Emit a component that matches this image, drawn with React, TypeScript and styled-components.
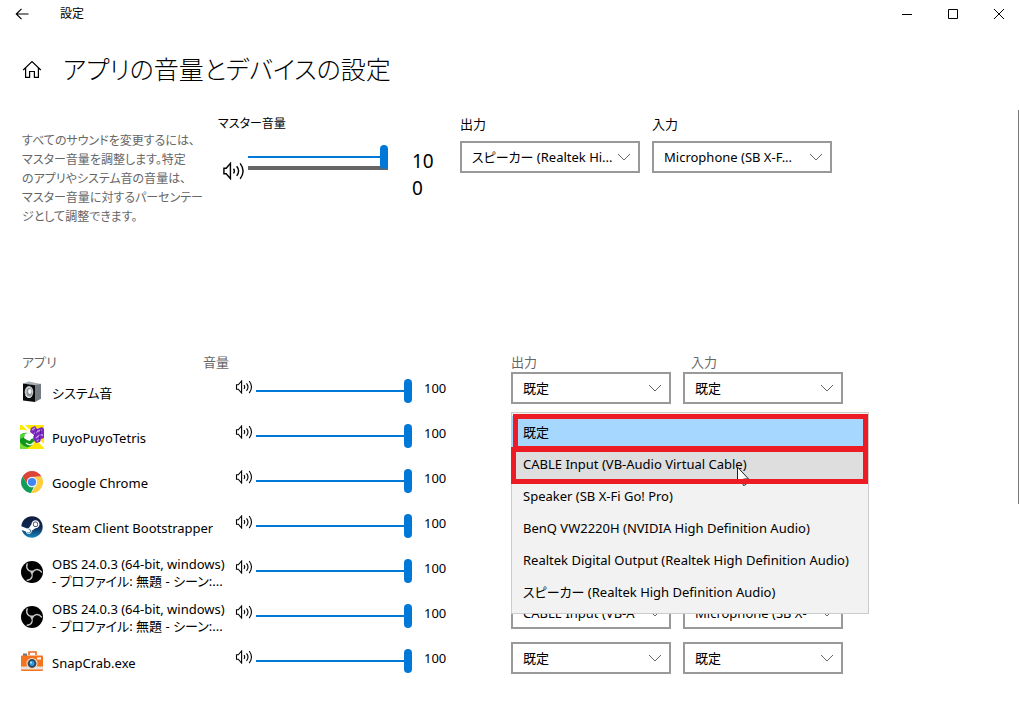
import React from "react";
import styled, { createGlobalStyle } from "styled-components";
import { FaSteam } from "react-icons/fa";

const Global = createGlobalStyle`
  *, *::before, *::after { box-sizing: border-box; }
  body {
    margin: 0;
    background: #fff;
    color: #000;
    font-family: "Noto Sans", "Noto Sans CJK JP", sans-serif;
    font-size: 13px;
    line-height: 18px;
    font-feature-settings: "palt";
  }
  h1, p, ul { margin: 0; padding: 0; }
  ul { list-style: none; }
  button { border: 0; background: none; padding: 0; font: inherit; color: inherit; }
`;

const Page = styled.div`
  min-height: 100vh;
  display: flex;
  flex-direction: column;
  overflow: hidden;
`;

const TitleBar = styled.header`
  display: flex;
  align-items: center;
  height: 28px;
  font-size: 12px;
`;

const BackButton = styled.button`
  width: 44px;
  height: 28px;
  display: grid;
  place-items: center;
`;

const WindowName = styled.span`
  margin-left: 16px;
  flex: 1;
`;

const WindowControls = styled.div`
  display: grid;
  grid-template-columns: 46px 46px 43px;
  height: 28px;
`;

const WindowButton = styled.button`
  display: flex;
  align-items: center;
  padding-left: 18px;
`;

const Heading = styled.div`
  display: flex;
  align-items: center;
  height: 82px;
  padding-left: 22px;
  gap: 21px;

  a { display: block; height: 18px; color: #000; }
  h1 { font-weight: 300; font-size: 25px; line-height: 40px; }
`;

const Body = styled.div`
  display: flex;
  flex: 1;
`;

const Content = styled.main`
  flex: 1;
  min-width: 0;
`;

const ScrollThumb = styled.div`
  width: 1px;
  height: 394px;
  background: #7a7a7a;
`;

const Master = styled.section`
  display: grid;
  grid-template-columns: 196px 242px 1fr;
  padding-left: 22px;
  height: 242px;
  align-items: start;
`;

const Intro = styled.p`
  padding-top: 21px;
  color: #666;
  font-size: 12px;
  line-height: 19px;
  white-space: nowrap;

  span { display: block; }
`;

const MasterVolume = styled.div`
  padding-top: 5px;

  label { display: block; font-size: 12px; }
`;

const MasterRow = styled.div`
  display: grid;
  grid-template-columns: 30px 140px 48px;
  align-items: start;
  padding-top: 12px;
`;

const MuteButton = styled.button<{ $large?: boolean }>`
  display: flex;
  padding: ${(p) => (p.$large ? "17px 0 0 4px" : "8px 0 0 3px")};
`;

const SliderBox = styled.div`
  position: relative;
  display: flex;
`;

const Slider = styled.input`
  appearance: none;
  position: relative;
  z-index: 1;
  width: 100%;
  height: 24px;
  margin: 0;
  background: linear-gradient(#0078d7, #0078d7) center / 100% 2px no-repeat;

  &::-webkit-slider-thumb {
    appearance: none;
    width: 8px;
    height: 24px;
    border-radius: 4px;
    background: #0078d7;
  }
`;

const PeakMeter = styled.div`
  position: absolute;
  left: 0;
  right: 0;
  bottom: -1px;
  height: 4px;
  background: #666;
`;

const MasterValue = styled.output`
  display: block;
  width: 24px;
  margin-left: 24px;
  padding-top: 3px;
  font-size: 19px;
  line-height: 27px;
  word-break: break-all;
`;

const Devices = styled.div`
  display: flex;
  gap: 12px;
  padding-top: 5px;
`;

const Field = styled.label`
  display: grid;
  gap: 8px;
`;

const SelectBox = styled.span<{ $width: number }>`
  position: relative;
  display: block;
  flex: none;
  width: ${(p) => p.$width}px;
  height: 32px;

  select {
    appearance: none;
    display: block;
    width: 100%;
    height: 32px;
    padding: 0 24px 1px 10px;
    border: 2px solid #999;
    border-radius: 0;
    background: #fff;
    color: #000;
    font: inherit;
    font-feature-settings: inherit;
  }
  svg {
    position: absolute;
    right: 9px;
    top: 12px;
    pointer-events: none;
  }
`;

const ListHeader = styled.div`
  display: grid;
  grid-template-columns: 181px 308px 180px 160px;
  padding-left: 22px;
  height: 20px;
  line-height: 20px;
  color: #666;
`;

const AppRow = styled.li`
  display: grid;
  grid-template-columns: 212px 24px 156px 99px 1fr;
  padding-left: 20px;
  height: 45px;
  align-items: start;
`;

const AppName = styled.div`
  display: flex;
  align-items: center;
  gap: 8px;
  height: 40px;
  line-height: 17px;
  white-space: nowrap;

  svg { flex: none; }
  div { padding-top: 2px; }
  span { display: block; }
`;

const AppSlider = styled(SliderBox)`
  padding-top: 7px;
`;

const AppValue = styled.output`
  padding: 7px 0 0 12px;
`;

const AppDevices = styled.div`
  position: relative;
  display: flex;
  gap: 12px;
`;

const Popup = styled.ul`
  position: absolute;
  z-index: 2;
  left: 0;
  top: -5px;
  width: 358px;
  padding: 3px 0 5px;
  border: 1px solid #ccc;
  background: #f2f2f2;
`;

const Option = styled.li<{ $bg?: string }>`
  height: 32px;
  padding: 7px 11px;
  background: ${(p) => p.$bg || "transparent"};
  white-space: nowrap;
`;

const Outline = styled.div<{ $top: number; $left: number }>`
  position: absolute;
  top: ${(p) => p.$top}px;
  left: ${(p) => p.$left}px;
  right: 0;
  height: 37px;
  border: 5px solid #ed1c24;
`;

const Pointer = styled.svg`
  position: absolute;
  left: 224px;
  top: 53px;
`;

const SpeakerIcon = ({ w = 18, h = 14 }: { w?: number; h?: number }) => (
  <svg width={w} height={h} viewBox="0 0 18 14" fill="none" stroke="#000" strokeWidth="1.1">
    <path d="M1.5 4.8v4.4h1.8L6.6 13V1L3.3 4.8z" />
    <path d="M9 5.2q1.4 1.8 0 3.7M11.5 3.3q3 3.7 0 7.5M14.2 1q4.6 6 0 12.2" />
  </svg>
);

const Chevron = () => (
  <svg width="14" height="8" viewBox="0 0 14 8" fill="none" stroke="#666" strokeWidth="1">
    <path d="M1 1l6 6 6-6" />
  </svg>
);

const SystemIcon = () => (
  <svg width="24" height="24" viewBox="0 0 24 24">
    <path d="M3 3.5L9 1.5l12 2.5-6 1.5z" fill="#a9b0b5" />
    <path d="M15 5l6-1.2v15L15 22z" fill="#737b83" />
    <path d="M3 3.5l12 1.7V22L3 20.5z" fill="#0b0b0d" />
    <ellipse cx="9" cy="12" rx="4.3" ry="6" fill="#c8ccd0" />
    <ellipse cx="9.3" cy="12.2" rx="2.8" ry="4.2" fill="#8d9398" />
    <ellipse cx="9.8" cy="11.5" rx="1.7" ry="2.4" fill="#f3f5f6" />
    <path d="M5.5 15q1.5 3 5 2.5" stroke="#eee" fill="none" />
  </svg>
);

const PuyoIcon = () => (
  <svg width="24" height="24" viewBox="0 0 24 24">
    <rect width="24" height="24" fill="#ffe800" />
    <path d="M2 0h3l19 19v4z" fill="#fff" />
    <path d="M0 5q6-1 10 3l-2 3-8-1z" fill="#fff" />
    <path d="M11 3l4-2 2 3 5-2 2 2v9l-3 1-1 3-4 1-3-4 1-4-4-3z" fill="#7a28c0" />
    <path d="M12 5l3-2M14 9l4-3 4-1M16 13l4-3 3 0M17 16l3-2" stroke="#c794f2" strokeWidth="1.5" fill="none" />
    <path d="M17 4l-3 8M21 4l-2 12" stroke="#5a1699" strokeWidth="1" />
    <path d="M0 10q5-4 10-1 5 4 4 9-3 5-9 4-4-1-5-4z" fill="#11951f" />
    <path d="M0 10q3-2 6-2l-2 4-4 2z" fill="#54d53e" />
    <path d="M5 9q5-3 8 2 1 3-2 3l-1 2-3-1-3-2z" fill="#fff" />
    <path d="M6 18q5 4 8-1" stroke="#e3fbd6" strokeWidth="1.5" fill="none" />
    <path d="M0 17q3 5 9 5l-2 2H0z" fill="#7ada35" />
  </svg>
);

const ChromeIcon = () => (
  <svg width="24" height="24" viewBox="0 0 24 24">
    <circle cx="12" cy="12" r="11" fill="#fff" />
    <path d="M2.5 6.5A11 11 0 0 1 21.5 6.5L12 7A5 5 0 0 0 7.7 14.5z" fill="#db4437" />
    <path d="M2.5 6.5L7.7 14.5A5 5 0 0 0 14 16.6L11 23A11 11 0 0 1 2.5 6.5z" fill="#0f9d58" />
    <path d="M21.5 6.5A11 11 0 0 1 11 23L16.3 14.5A5 5 0 0 0 12 7z" fill="#ffcd40" />
    <circle cx="12" cy="12" r="5.2" fill="#f1f1f1" />
    <circle cx="12" cy="12" r="4.1" fill="#4285f4" />
  </svg>
);

const SteamIcon = () => (
  <svg width="24" height="24" viewBox="0 0 24 24">
    <defs>
      <linearGradient id="steam" x1="0" y1="0" x2="0" y2="1">
        <stop offset="0" stopColor="#111d3e" />
        <stop offset=".5" stopColor="#0c2752" />
        <stop offset="1" stopColor="#1488bd" />
      </linearGradient>
    </defs>
    <FaSteam x="1" y="1" size={22} fill="url(#steam)" />
  </svg>
);

const ObsIcon = () => (
  <svg width="24" height="24" viewBox="0 0 24 24">
    <circle cx="12" cy="12" r="11" fill="#000" />
    {[0, 120, 240].map((angle) => (
      <path
        key={angle}
        transform={`rotate(${angle} 12 12)`}
        d="M12.8 11.2C8.5 11.8 5.5 8.5 7.2 3.8"
        fill="none"
        stroke="#c8c8c8"
        strokeWidth="1.4"
        strokeLinecap="round"
      />
    ))}
  </svg>
);

const CameraIcon = () => (
  <svg width="24" height="24" viewBox="0 0 24 24">
    <path d="M9 5V2h7v3" fill="none" stroke="#f0691c" strokeWidth="1.6" />
    <rect x="3" y="3.5" width="4" height="3" fill="#6b7780" />
    <rect x="1" y="5.5" width="22" height="15.5" rx="1" fill="#f4731f" />
    <rect x="1" y="16.5" width="22" height="3" fill="#e8e2dc" />
    <rect x="17" y="7.5" width="4" height="2" fill="#fff" />
    <circle cx="12" cy="13.5" r="5.6" fill="#fbd9bd" />
    <circle cx="12" cy="13.5" r="4.4" fill="#2a4a66" />
    <circle cx="12" cy="13.5" r="2.4" fill="#2f9be0" />
    <circle cx="11" cy="12.5" r="1" fill="#c9ecff" />
  </svg>
);

const DeviceSelect = ({ value, label, width }: { value: string; label?: string; width: number }) => (
  <SelectBox $width={width}>
    <select aria-label={label}>
      <option>{value}</option>
    </select>
    <Chevron />
  </SelectBox>
);

const obsName = ["OBS 24.0.3 (64-bit, windows)", "- プロファイル: 無題 - シーン:..."];

const apps = [
  { name: ["システム音"], Icon: SystemIcon, out: "既定", inp: "既定" },
  { name: ["PuyoPuyoTetris"], Icon: PuyoIcon, out: "既定", inp: "既定", open: true },
  { name: ["Google Chrome"], Icon: ChromeIcon, out: "既定", inp: "既定" },
  { name: ["Steam Client Bootstrapper"], Icon: SteamIcon, out: "既定", inp: "既定" },
  { name: obsName, Icon: ObsIcon, out: "既定", inp: "既定" },
  { name: obsName, Icon: ObsIcon, out: "CABLE Input (VB-A", inp: "Microphone (SB X-" },
  { name: ["SnapCrab.exe"], Icon: CameraIcon, out: "既定", inp: "既定" },
];

const outputs = [
  "既定",
  "CABLE Input (VB-Audio Virtual Cable)",
  "Speaker (SB X-Fi Go! Pro)",
  "BenQ VW2220H (NVIDIA High Definition Audio)",
  "Realtek Digital Output (Realtek High Definition Audio)",
  "スピーカー (Realtek High Definition Audio)",
];
const optionColors = ["#a6d8ff", "#dedede"];

const OutputPopup = () => (
  <Popup role="listbox" aria-label="出力">
    {outputs.map((o, i) => (
      <Option key={o} role="option" aria-selected={i === 0} $bg={optionColors[i]}>
        {o}
      </Option>
    ))}
    <Pointer width="14" height="21" viewBox="0 0 14 21" aria-hidden="true">
      <path d="M1.5 1v16l3.5-3.5 2.5 6 2.5-1-2.5-5.5h5z" fill="#fff" stroke="#222" />
    </Pointer>
    <Outline $top={1} $left={1} />
    <Outline $top={34} $left={-1} />
  </Popup>
);

export default function App() {
  return (
    <Page>
      <Global />
      <TitleBar>
        <BackButton aria-label="戻る">
          <svg width="14" height="12" viewBox="0 0 14 12" fill="none" stroke="#000" strokeWidth="1.2">
            <path d="M13.5 6H1.5M6.5 .8L1.3 6l5.2 5.2" />
          </svg>
        </BackButton>
        <WindowName>設定</WindowName>
        <WindowControls>
          <WindowButton aria-label="最小化">
            <svg width="10" height="10" viewBox="0 0 10 10"><path d="M0 5.5h10" stroke="#000" /></svg>
          </WindowButton>
          <WindowButton aria-label="最大化">
            <svg width="10" height="10" viewBox="0 0 10 10"><path d="M.5.5h9v9h-9z" stroke="#000" fill="none" /></svg>
          </WindowButton>
          <WindowButton aria-label="閉じる">
            <svg width="10" height="10" viewBox="0 0 10 10"><path d="M0 0l10 10M10 0L0 10" stroke="#000" /></svg>
          </WindowButton>
        </WindowControls>
      </TitleBar>

      <Heading>
        <a href="#home" aria-label="ホーム">
          <svg width="20" height="18" viewBox="0 0 20 18" fill="none" stroke="#000" strokeWidth="1.2">
            <path d="M1.2 10L10 1.6 18.8 10M3.6 8.3v9.1h4v-5.9h4.8v5.9h4v-9.1" />
          </svg>
        </a>
        <h1>アプリの音量とデバイスの設定</h1>
      </Heading>

      <Body>
        <Content>
          <Master>
            <Intro>
              <span>すべてのサウンドを変更するには、</span>
              <span>マスター音量を調整します。特定</span>
              <span>のアプリやシステム音の音量は、</span>
              <span>マスター音量に対するパーセンテー</span>
              <span>ジとして調整できます。</span>
            </Intro>
            <MasterVolume>
              <label htmlFor="master">マスター音量</label>
              <MasterRow>
                <MuteButton $large aria-label="ミュート"><SpeakerIcon w={23} h={18} /></MuteButton>
                <SliderBox>
                  <Slider id="master" type="range" defaultValue={100} />
                  <PeakMeter />
                </SliderBox>
                <MasterValue htmlFor="master">100</MasterValue>
              </MasterRow>
            </MasterVolume>
            <Devices>
              <Field>
                出力
                <DeviceSelect width={180} value="スピーカー (Realtek Hi..." />
              </Field>
              <Field>
                入力
                <DeviceSelect width={180} value="Microphone (SB X-F..." />
              </Field>
            </Devices>
          </Master>

          <ListHeader>
            <span>アプリ</span>
            <span>音量</span>
            <span>出力</span>
            <span>入力</span>
          </ListHeader>
          <ul>
            {apps.map(({ name, Icon, out, inp, open }, i) => (
              <AppRow key={i}>
                <AppName>
                  <Icon />
                  <div>{name.map((line) => <span key={line}>{line}</span>)}</div>
                </AppName>
                <MuteButton aria-label="ミュート"><SpeakerIcon /></MuteButton>
                <AppSlider>
                  <Slider type="range" defaultValue={100} aria-label={`${name[0]} 音量`} />
                </AppSlider>
                <AppValue>100</AppValue>
                <AppDevices>
                  <DeviceSelect width={160} value={out} label="出力" />
                  <DeviceSelect width={160} value={inp} label="入力" />
                  {open && <OutputPopup />}
                </AppDevices>
              </AppRow>
            ))}
          </ul>
        </Content>
        <ScrollThumb />
      </Body>
    </Page>
  );
}
